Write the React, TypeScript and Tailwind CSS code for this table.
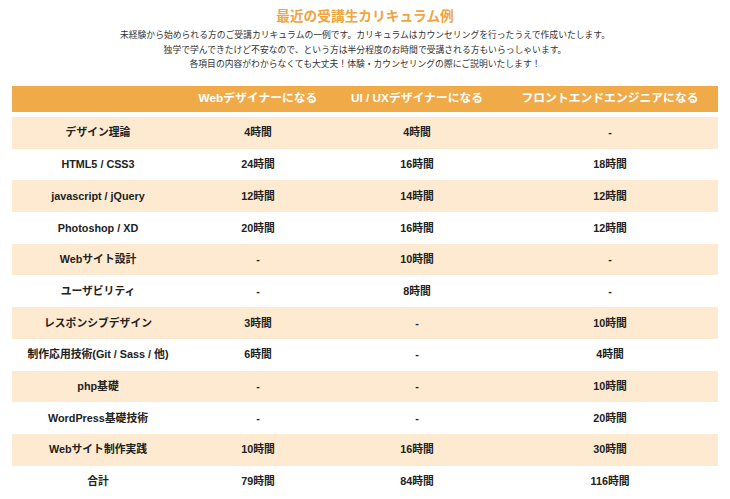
import React from "react";

const rows: [string, string, string, string][] = [
  ["デザイン理論", "4時間", "4時間", "-"],
  ["HTML5 / CSS3", "24時間", "16時間", "18時間"],
  ["javascript / jQuery", "12時間", "14時間", "12時間"],
  ["Photoshop / XD", "20時間", "16時間", "12時間"],
  ["Webサイト設計", "-", "10時間", "-"],
  ["ユーザビリティ", "-", "8時間", "-"],
  ["レスポンシブデザイン", "3時間", "-", "10時間"],
  ["制作応用技術(Git / Sass / 他)", "6時間", "-", "4時間"],
  ["php基礎", "-", "-", "10時間"],
  ["WordPress基礎技術", "-", "-", "20時間"],
  ["Webサイト制作実践", "10時間", "16時間", "30時間"],
  ["合計", "79時間", "84時間", "116時間"],
];

const cols = "grid grid-cols-[172px_148px_170px_216px]";

export default function App() {
  return (
    <div
      className="w-[730px] h-[499px] bg-white overflow-hidden"
      style={{ fontFamily: '"Liberation Sans", "Noto Sans CJK JP", sans-serif' }}
    >
      <div className="pt-[8px] text-center text-[13.7px] leading-[18px] font-bold text-[#f0a53f]">
        最近の受講生カリキュラム例
      </div>
      <div className="mt-[2px] text-center text-[8.8px] leading-[14.5px] text-[#333]">
        <p>未経験から始められる方のご受講カリキュラムの一例です。カリキュラムはカウンセリングを行ったうえで作成いたします。</p>
        <p>独学で学んできたけど不安なので、という方は半分程度のお時間で受講される方もいらっしゃいます。</p>
        <p>各項目の内容がわからなくても大丈夫！体験・カウンセリングの際にご説明いたします！</p>
      </div>
      <div className="mt-[14.5px] mx-[12px] w-[706px]">
        <div className={`${cols} h-[26px] bg-[#f0ab48] text-white font-bold text-[11.8px] leading-none items-center text-center`}>
          <div></div>
          <div>Webデザイナーになる</div>
          <div>UI / UXデザイナーになる</div>
          <div>フロントエンドエンジニアになる</div>
        </div>
        <div className="mt-[5px]">
          {rows.map((r, i) => (
            <div
              key={i}
              className={`${cols} h-[31.7px] items-center text-center font-bold text-[10.8px] leading-none text-[#222] ${
                i % 2 === 0 ? "bg-[#fdead0]" : "bg-white"
              }`}
            >
              {r.map((c, j) => (
                <div key={j}>{c}</div>
              ))}
            </div>
          ))}
        </div>
      </div>
    </div>
  );
}
